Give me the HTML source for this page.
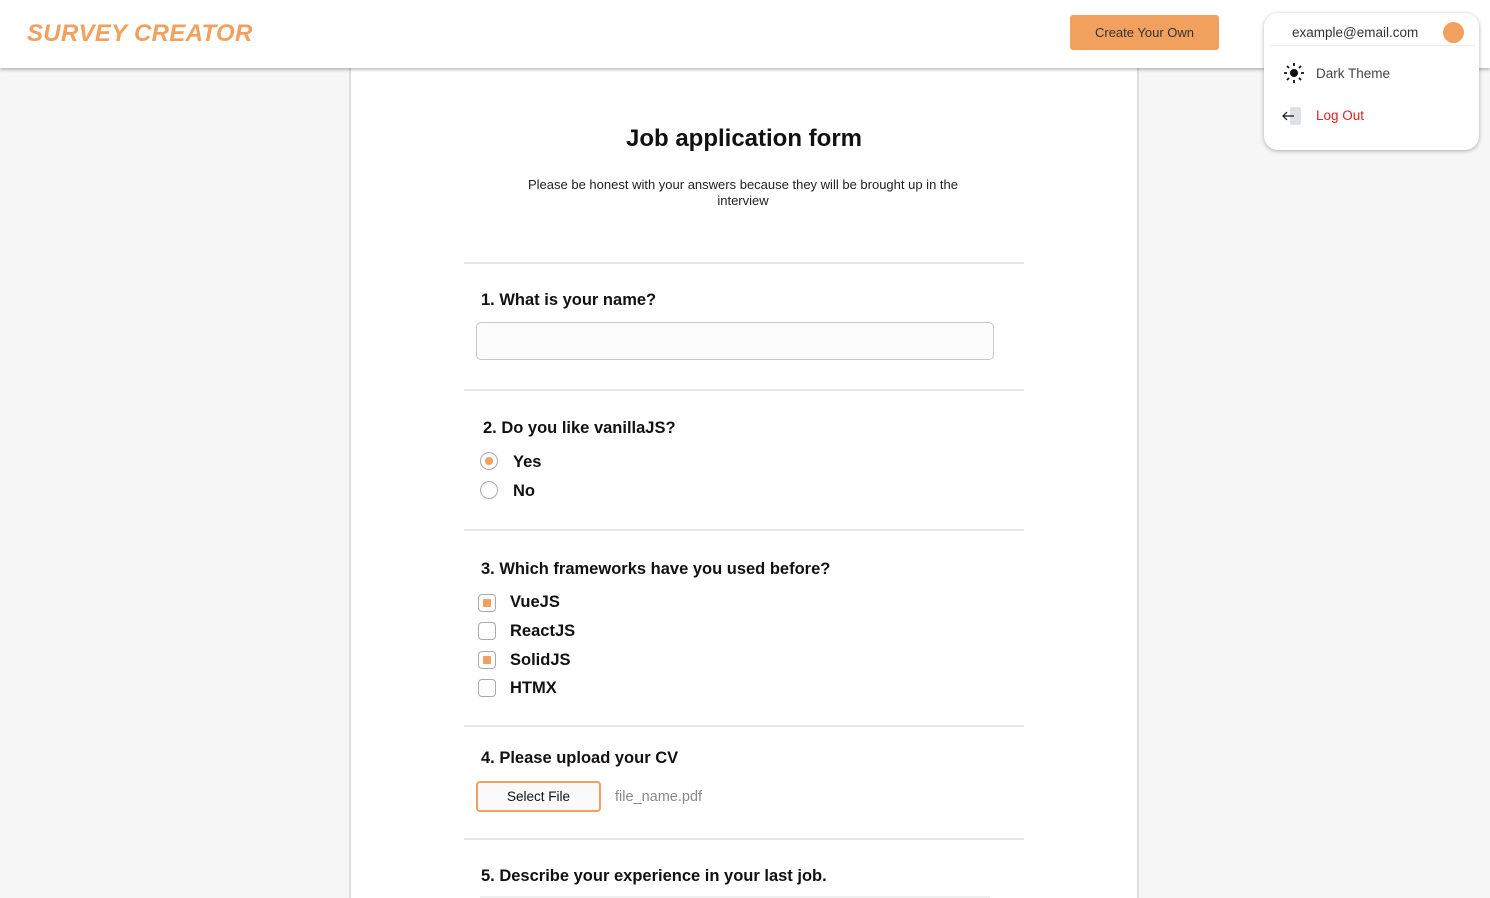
<!DOCTYPE html>
<html><head><meta charset="utf-8"><style>
*{margin:0;padding:0;box-sizing:border-box}
html,body{width:1490px;height:898px;overflow:hidden}
body{background:#f6f6f6;font-family:"Liberation Sans",sans-serif;position:relative;color:#111}
.abs{position:absolute}
.card{left:349px;top:60px;width:790px;height:838px;background:#fff;border-left:2px solid #ddd;border-right:2px solid #ddd}
header{position:absolute;left:0;top:0;width:1490px;height:68px;background:#fff;box-shadow:0 2px 3px rgba(0,0,0,.25)}
.hr{left:464px;width:560px;height:2px;background:#e8e8e8}
.q{font-size:16.5px;font-weight:bold;color:#111}
.opt{font-size:16.5px;font-weight:bold}
.radio{width:18px;height:18px;border:1px solid #aaa;border-radius:50%;background:#fff}
.cb{width:18px;height:18px;border:1px solid #aaa;border-radius:4px;background:#fff}
.cb.on::after{content:"";position:absolute;left:4px;top:4px;width:8px;height:8px;background:#f2a05e;border-radius:1px}
</style></head><body>
<div class="abs card"></div>
<header>
<div class="abs" style="left:27px;top:20px;font-size:24px;font-weight:bold;font-style:italic;color:#f2a05e;letter-spacing:0.3px">SURVEY CREATOR</div>
<div class="abs" style="left:1070px;top:15px;width:149px;height:35px;background:#f2a05e;border-radius:3px;font-size:13px;color:#333;text-align:center;line-height:35px">Create Your Own</div>
</header>
<div class="abs" style="left:1264px;top:13px;width:215px;height:137px;background:#fff;border-radius:14px;box-shadow:0 1px 4px rgba(0,0,0,.3)"></div>
<div class="abs" style="left:1270px;top:45px;width:205px;height:1px;background:#f0f0f0"></div>
<div class="abs" style="left:1292px;top:25px;font-size:13.5px;color:#333">example@email.com</div>
<div class="abs" style="left:1443px;top:22px;width:21px;height:21px;border-radius:50%;background:#f2a05e"></div>
<svg class="abs" style="left:1283px;top:62px" width="22" height="22" viewBox="0 0 22 22"><circle cx="11" cy="11" r="4" fill="#111"/><g stroke="#111" stroke-width="1.8"><path d="M11 1v3M11 18v3M1 11h3M18 11h3M4 4l2 2M16 16l2 2M4 18l2-2M16 6l2-2"/></g></svg>
<div class="abs" style="left:1316px;top:66px;font-size:13.5px;color:#444">Dark Theme</div>
<div class="abs" style="left:1290px;top:107px;width:11px;height:18px;background:#dfe0e6;border-radius:2px"></div>
<svg class="abs" style="left:1281px;top:109px" width="14" height="14" viewBox="0 0 14 14"><path d="M13 7H2M6 3L2 7l4 4" stroke="#111" stroke-width="1.2" fill="none"/></svg>
<div class="abs" style="left:1316px;top:108px;font-size:13.5px;color:#d22">Log Out</div>

<div class="abs" style="left:349px;top:125px;width:790px;text-align:center;font-size:24px;font-weight:bold;color:#111">Job application form</div>
<div class="abs" style="left:503px;top:177px;width:480px;text-align:center;font-size:13px;color:#222;line-height:16px">Please be honest with your answers because they will be brought up in the interview</div>

<div class="abs hr" style="top:262px"></div>
<div class="abs q" style="left:481px;top:291px">1. What is your name?</div>
<div class="abs" style="left:476px;top:322px;width:518px;height:38px;border:1px solid #c8c8c8;border-radius:5px;background:#fcfcfc"></div>
<div class="abs hr" style="top:389px"></div>

<div class="abs q" style="left:483px;top:419px">2. Do you like vanillaJS?</div>
<div class="abs radio" style="left:480px;top:452px"></div>
<div class="abs" style="left:485px;top:457px;width:8px;height:8px;border-radius:50%;background:#f2a05e"></div>
<div class="abs opt" style="left:513px;top:453px">Yes</div>
<div class="abs radio" style="left:480px;top:481px"></div>
<div class="abs opt" style="left:513px;top:482px">No</div>
<div class="abs hr" style="top:529px"></div>

<div class="abs q" style="left:481px;top:560px">3. Which frameworks have you used before?</div>
<div class="abs cb on" style="left:478px;top:594px"></div><div class="abs opt" style="left:510px;top:593px">VueJS</div>
<div class="abs cb" style="left:478px;top:622px"></div><div class="abs opt" style="left:510px;top:622px">ReactJS</div>
<div class="abs cb on" style="left:478px;top:651px"></div><div class="abs opt" style="left:510px;top:651px">SolidJS</div>
<div class="abs cb" style="left:478px;top:679px"></div><div class="abs opt" style="left:510px;top:679px">HTMX</div>
<div class="abs hr" style="top:725px"></div>

<div class="abs q" style="left:481px;top:749px">4. Please upload your CV</div>
<div class="abs" style="left:476px;top:781px;width:125px;height:31px;border:2px solid #f2a05e;border-radius:4px;background:#fafafa;text-align:center;line-height:27px;font-size:13.5px;color:#111">Select File</div>
<div class="abs" style="left:615px;top:789px;font-size:14.5px;color:#888">file_name.pdf</div>
<div class="abs hr" style="top:838px"></div>

<div class="abs q" style="left:481px;top:867px">5. Describe your experience in your last job.</div>
<div class="abs" style="left:480px;top:896px;width:510px;height:2px;background:#f0f0f0"></div>
</body></html>
